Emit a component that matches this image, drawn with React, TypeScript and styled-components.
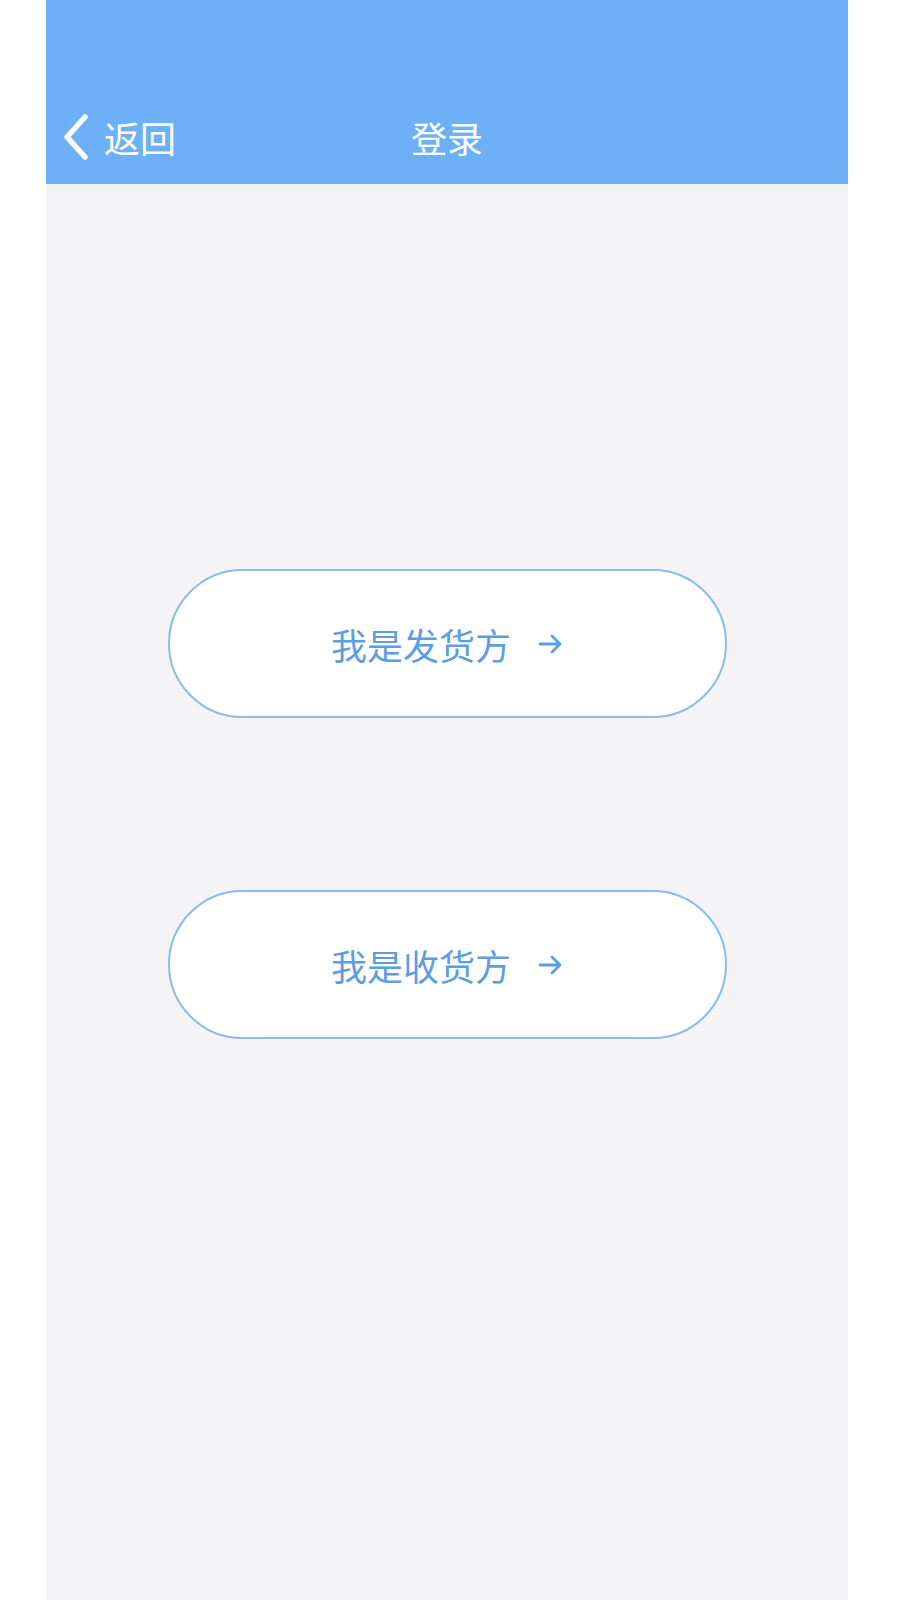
import React from "react";
import styled, { createGlobalStyle } from "styled-components";

const Global = createGlobalStyle`
  html, body { margin: 0; padding: 0; background: #ffffff; }
  body { font-family: "Noto Sans CJK SC", "Noto Sans", sans-serif; }
`;

const Phone = styled.div`
  margin-left: 46px;
  width: 802px;
  min-height: 1600px;
  background: #f4f4f6;
  display: flex;
  flex-direction: column;
`;

const Header = styled.header`
  height: 184px;
  background: #6db0f8;
  box-sizing: border-box;
  padding-top: 95px;
  display: flex;
  align-items: flex-start;
`;

const NavRow = styled.div`
  position: relative;
  flex: 1;
  height: 83px;
  display: flex;
  align-items: center;
  justify-content: center;
`;

const Back = styled.div`
  position: absolute;
  left: 16px;
  top: 0;
  bottom: 0;
  display: flex;
  align-items: center;
  gap: 15px;
  color: #ffffff;
  font-size: 36px;
  font-weight: 400;
  line-height: 1;
`;

const Title = styled.h1`
  margin: 0;
  color: #ffffff;
  font-size: 36px;
  font-weight: 400;
  line-height: 1;
`;

const Main = styled.main`
  display: flex;
  flex-direction: column;
  align-items: center;
  padding-top: 385px;
  gap: 172px;
`;

const RoleButton = styled.button`
  width: 559px;
  height: 149px;
  box-sizing: border-box;
  border: 2px solid #8dbbe8;
  border-radius: 75px;
  background: #ffffff;
  display: flex;
  align-items: center;
  justify-content: center;
  padding: 0;
  gap: 27px;
  color: #5d9ee3;
  font-family: "Noto Sans CJK SC", "Noto Sans", sans-serif;
  font-size: 36px;
  font-weight: 400;
  line-height: 1;
  cursor: pointer;
`;

const Chevron = () => (
  <svg width="27" height="46" viewBox="0 0 27 46" fill="none">
    <path d="M23 3 L5 23 L23 43" stroke="#ffffff" strokeWidth="5.5" strokeLinecap="round" strokeLinejoin="round" />
  </svg>
);

const Arrow = () => (
  <svg width="25" height="22" viewBox="0 0 25 22" fill="none">
    <path d="M2 11 H22 M14 3 L22 11 L14 19" stroke="#5d9ee3" strokeWidth="2.8" strokeLinecap="round" strokeLinejoin="round" />
  </svg>
);

export default function App() {
  return (
    <>
      <Global />
      <Phone>
        <Header>
          <NavRow>
            <Back>
              <Chevron />
              <span>返回</span>
            </Back>
            <Title>登录</Title>
          </NavRow>
        </Header>
        <Main>
          <RoleButton>
            <span>我是发货方</span>
            <Arrow />
          </RoleButton>
          <RoleButton>
            <span>我是收货方</span>
            <Arrow />
          </RoleButton>
        </Main>
      </Phone>
    </>
  );
}
